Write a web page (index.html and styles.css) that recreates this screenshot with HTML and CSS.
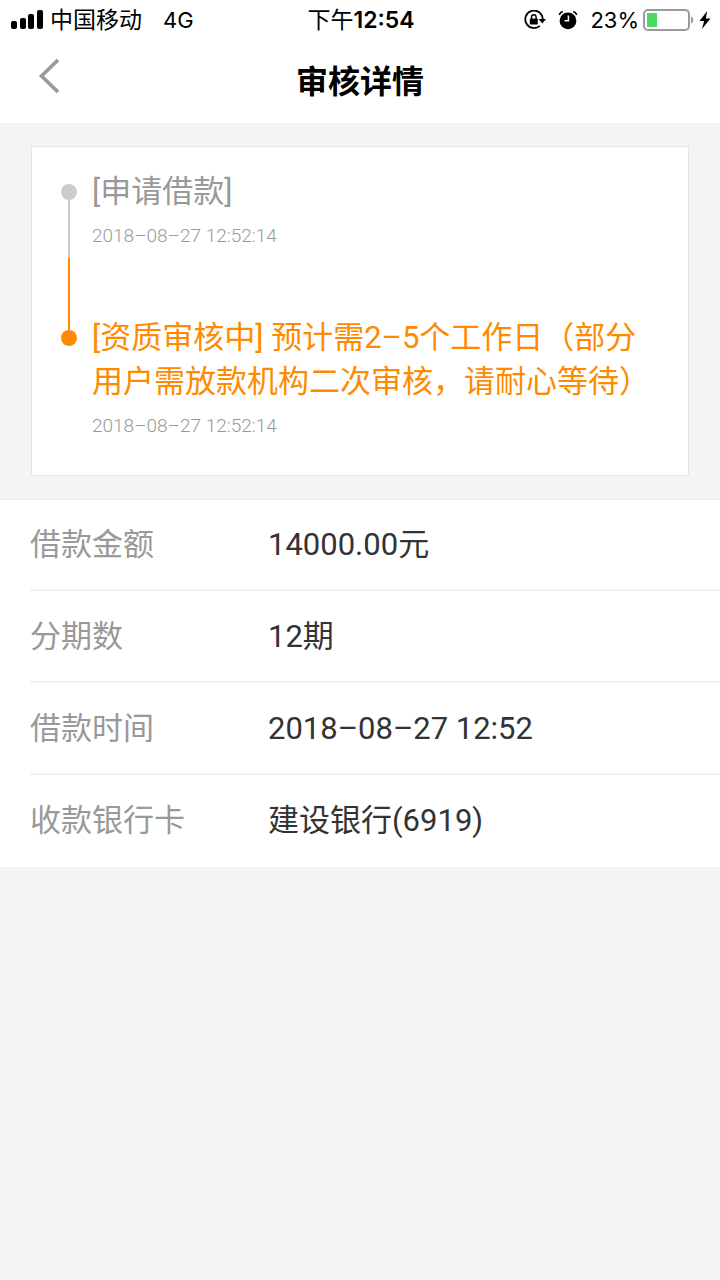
FILE: index.html
```html
<!DOCTYPE html>
<html lang="zh-CN">
<head>
    <meta charset="UTF-8">
    <meta name="viewport" content="width=device-width, initial-scale=1.0">
    <title>审核详情</title>
    <link rel="stylesheet" href="styles.css">
</head>
<body>
    <header class="header">
        <div class="status-bar">
            <div class="status-left">
                <svg class="signal" width="33" height="20" viewBox="0 0 33 20" aria-hidden="true">
                    <rect x="0" y="11" width="6" height="8" rx="2"/>
                    <rect x="9" y="8" width="6" height="11" rx="2"/>
                    <rect x="17" y="4" width="6" height="15" rx="2"/>
                    <rect x="26" y="0" width="6" height="19" rx="2"/>
                </svg>
                <span class="carrier">中国移动</span>
                <span class="network">4G</span>
            </div>
            <div class="status-time">下午<b>12:54</b></div>
            <div class="status-right">
                <svg width="22" height="20" viewBox="0 0 22 20" aria-hidden="true">
                    <path d="M15.8 15.8A8.7 8.7 0 1 1 18.700 9" fill="none" stroke="#000" stroke-width="1.8"/>
                    <path d="M14.500 9h7.500l-3.700 4.600z"/>
                    <rect x="5.8" y="8.6" width="8" height="6" rx="0.8"/>
                    <path d="M7.500 9V7a2.300 2.300 0 0 1 4.600 0v2" fill="none" stroke="#000" stroke-width="1.4"/>
                </svg>
                <svg class="alarm" width="20" height="20" viewBox="0 0 20 20" aria-hidden="true">
                    <circle cx="10" cy="10.8" r="8.4"/>
                    <path d="M1.200 4.800A6 6 0 0 1 4.800 1.600M18.800 4.800A6 6 0 0 0 15.200 1.600" fill="none" stroke="#000" stroke-width="1.6"/>
                    <path d="M10.400 5.500v5.300H6.600" fill="none" stroke="#fff" stroke-width="1.5"/>
                </svg>
                <span>23%</span>
                <svg class="battery" width="52" height="22" viewBox="0 0 52 22" aria-hidden="true">
                    <rect x="1" y="1" width="45" height="20" rx="4" fill="#fff" stroke="#9b9b9b" stroke-width="2"/>
                    <rect x="4" y="4" width="10" height="14" fill="#4cd964"/>
                    <path d="M48 7.500c3 1 3 6 0 7z" fill="#9b9b9b"/>
                </svg>
                <svg class="bolt" width="12" height="18" viewBox="0 0 12 18" aria-hidden="true">
                    <path d="M8.200 0L0.500 10h4.600L3 18l8.500-10.600H6.800z"/>
                </svg>
            </div>
        </div>
        <nav class="nav">
            <button class="back" type="button" aria-label="返回">
                <svg width="22" height="34" viewBox="0 0 22 34" aria-hidden="true">
                    <path d="M20 1L3.500 17L20 33" fill="none" stroke="#999" stroke-width="3.6"/>
                </svg>
            </button>
            <h1 class="title">审核详情</h1>
        </nav>
    </header>

    <main>
        <ol class="timeline">
            <li class="step">
                <div class="rail">
                    <span class="dot"></span>
                    <span class="line"></span>
                </div>
                <div class="step-body">
                    <p class="step-title">[申请借款]</p>
                    <time class="step-time">2018–08–27 12:52:14</time>
                </div>
            </li>
            <li class="step current">
                <div class="rail">
                    <span class="line"></span>
                    <span class="dot"></span>
                </div>
                <div class="step-body">
                    <p class="step-title">[资质审核中] 预计需2–5个工作日（部分用户需放款机构二次审核，请耐心等待）</p>
                    <time class="step-time">2018–08–27 12:52:14</time>
                </div>
            </li>
        </ol>

        <dl class="details">
            <div class="row">
                <dt>借款金额</dt>
                <dd>14000.00元</dd>
            </div>
            <div class="row">
                <dt>分期数</dt>
                <dd>12期</dd>
            </div>
            <div class="row">
                <dt>借款时间</dt>
                <dd>2018–08–27 12:52</dd>
            </div>
            <div class="row">
                <dt>收款银行卡</dt>
                <dd>建设银行(6919)</dd>
            </div>
        </dl>
    </main>
</body>
</html>
```

FILE: styles.css
```css
* { box-sizing: border-box; }
body { margin: 0; background: #f4f4f4; color: #333; font-family: Roboto, "Noto Sans CJK SC", sans-serif; font-size: 31px; line-height: 44px; }
h1, p, ol, dl, dd { margin: 0; padding: 0; }

.header { background: #fff; color: #000; }
.status-bar { display: grid; grid-template-columns: 1fr auto 1fr; align-items: center; height: 40px; padding: 0 9px 0 11px; font-family: Inter, "Noto Sans CJK SC", sans-serif; font-size: 22px; line-height: 40px; }
.status-left, .status-right { display: flex; align-items: center; }
.status-right { justify-content: flex-end; }
.signal { margin-right: 6px; }
.carrier, .status-time { font-size: 23px; }
.network { margin-left: 21px; }
.status-time b { font-weight: 600; }
.alarm { margin: 0 12px; }
.battery { margin: 0 4px; }

.nav { display: grid; grid-template-columns: 1fr auto 1fr; align-items: center; height: 83px; padding: 0 38px; }
.back { justify-self: start; display: flex; padding: 0 0 12px; border: 0; background: none; }
.title { font-size: 32px; font-weight: 700; line-height: 44px; }

.timeline { list-style: none; margin: 23px 31px; padding: 23px 28px 27px 29px; background: #fff; border: 1px solid #e5e5e5; }
.step { display: flex; gap: 15px; }
.rail { flex: none; display: flex; flex-direction: column; align-items: center; width: 16px; padding-top: 14px; color: #ccc; }
.dot { width: 16px; height: 16px; border-radius: 50%; background: currentColor; }
.line { flex: 1; width: 2px; background: currentColor; }
.step-body { color: #999; }
.step-time { display: block; font-size: 19px; font-weight: 300; }
.current .step-body { padding-top: 58px; }
.current .step-title { color: #ff8a00; }
.current .rail { padding-top: 0; color: #ff8a00; }
.current .line { flex: none; height: 72px; }

.details { background: #fff; box-shadow: inset 0 1px 0 #ececec; }
.row { display: flex; margin-left: 30px; padding: 24px 0 22px; border-bottom: 2px solid #f2f2f2; }
.row:last-child { border-bottom-color: transparent; }
.row dt { flex: none; width: 238px; color: #999; }
```
